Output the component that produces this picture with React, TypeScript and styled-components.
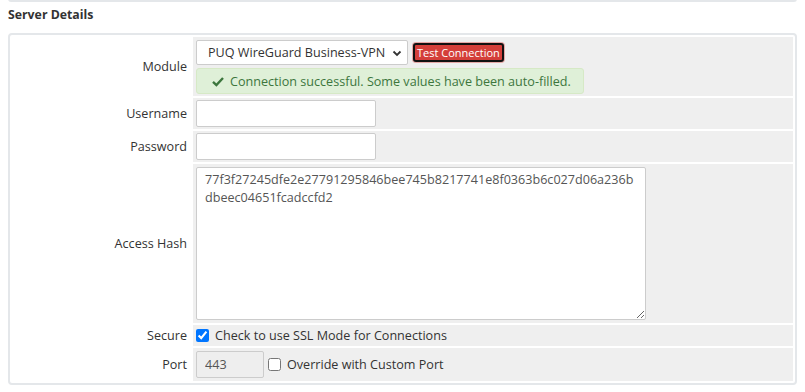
import React from "react";
import styled, { createGlobalStyle } from "styled-components";

const Global = createGlobalStyle`
  html, body { margin: 0; padding: 0; background: #fff; }
  body { margin: 0 8px; font-family: "Open Sans", "Liberation Sans", sans-serif; font-size: 12.6px; color: #333; }
  * { box-sizing: border-box; }
`;

const PrevPanel = styled.div`
  height: 3px;
  margin-top: -1px;
  border: 2px solid #e4e7ea;
  border-top: none;
  border-radius: 0 0 4px 4px;
`;

const Heading = styled.h2`
  margin: 0;
  padding: 4px 0 0 0;
  height: 31px;
  font-size: 12.3px;
  font-weight: 700;
  color: #333;
  line-height: 18px;
`;

const Panel = styled.div`
  border: 2px solid #e4e7ea;
  border-radius: 4px;
  background: #fff;
`;

const Table = styled.table`
  width: 100%;
  border-collapse: separate;
  border-spacing: 2px;
`;

const Label = styled.td`
  width: 179px;
  padding: 0 4px 0 3px;
  text-align: right;
  vertical-align: middle;
  color: #333;
  background: #fff;
`;

const Field = styled.td<{ $pad?: string }>`
  padding: ${(p) => p.$pad ?? "3px"};
  background: #efefef;
  vertical-align: middle;
  line-height: 17px;
`;

const Inline = styled.div<{ $gap?: number }>`
  display: flex;
  align-items: center;
  gap: ${(p) => p.$gap ?? 5}px;
`;

const Select = styled.div`
  display: flex;
  align-items: center;
  justify-content: space-between;
  width: 212px;
  height: 25px;
  padding: 0 4px 0 11px;
  background: #fff;
  border: 1px solid #ccc;
  border-radius: 2px;
  color: #333;
`;

const TestButton = styled.button`
  height: 19px;
  padding: 0 2px;
  font-family: "Open Sans", "Liberation Sans", sans-serif;
  font-size: 11px;
  line-height: 13px;
  color: #fff;
  background: #d43f3a;
  border: 2px solid #111;
  border-radius: 3px;
  box-shadow: 0 0 0 1px rgba(217, 83, 79, 0.45);
`;

const Alert = styled.div`
  display: flex;
  align-items: center;
  gap: 6px;
  width: 388px;
  height: 26px;
  margin-top: 3px;
  padding: 0 0 0 15px;
  background: #dff0d8;
  border: 1px solid #d6e9c6;
  border-radius: 3px;
  color: #3c763d;
  white-space: nowrap;
`;

const Input = styled.input<{ $w: number }>`
  display: block;
  width: ${(p) => p.$w}px;
  height: 27px;
  padding: 4px 8px;
  font-family: "Open Sans", "Liberation Sans", sans-serif;
  font-size: 12.6px;
  color: #555;
  background: ${(p) => (p.disabled ? "#eee" : "#fff")};
  border: 1px solid #ccc;
  border-radius: 2px;
`;

const TextArea = styled.textarea`
  display: block;
  width: 450px;
  height: 153px;
  padding: 3px 8px;
  font-family: "Open Sans", "Liberation Sans", sans-serif;
  font-size: 12.6px;
  line-height: 17.5px;
  color: #555;
  background: #fff;
  border: 1px solid #ccc;
  border-radius: 2px;
  resize: both;
  word-break: break-all;
`;

const Check = styled.label`
  display: flex;
  align-items: center;
  gap: 6px;
  color: #333;
  input { margin: 0; width: 13px; height: 13px; }
`;

const Chevron = () => (
  <svg width="12" height="12" viewBox="0 0 12 12">
    <path d="M2.5 4.5 L6 8 L9.5 4.5" fill="none" stroke="#333" strokeWidth="1.8" />
  </svg>
);

const CheckIcon = () => (
  <svg width="12" height="11" viewBox="0 0 12 11">
    <path d="M1 5.8 L4.4 9 L11 2" fill="none" stroke="#3c763d" strokeWidth="2.4" />
  </svg>
);

const hash =
  "77f3f27245dfe2e27791295846bee745b8217741e8f0363b6c027d06a236bdbeec04651fcadccfd2";

export default function App() {
  return (
    <>
      <Global />
      <PrevPanel />
      <Heading>Server Details</Heading>
      <Panel>
        <Table>
          <tbody>
            <tr>
              <Label>Module</Label>
              <Field $pad="3px 3px 2px 3px">
                <Inline>
                  <Select>
                    <span>PUQ WireGuard Business-VPN</span>
                    <Chevron />
                  </Select>
                  <TestButton>Test Connection</TestButton>
                </Inline>
                <Alert>
                  <CheckIcon />
                  <span>Connection successful. Some values have been auto-filled.</span>
                </Alert>
              </Field>
            </tr>
            <tr>
              <Label>Username</Label>
              <Field $pad="2px 3px">
                <Input $w={180} defaultValue="" />
              </Field>
            </tr>
            <tr>
              <Label>Password</Label>
              <Field $pad="2px 3px">
                <Input $w={180} type="password" defaultValue="" />
              </Field>
            </tr>
            <tr>
              <Label>Access Hash</Label>
              <Field>
                <TextArea defaultValue={hash} />
              </Field>
            </tr>
            <tr>
              <Label>Secure</Label>
              <Field $pad="2px 3px">
                <Check>
                  <input type="checkbox" defaultChecked />
                  Check to use SSL Mode for Connections
                </Check>
              </Field>
            </tr>
            <tr>
              <Label>Port</Label>
              <Field>
                <Inline $gap={4}>
                  <Input $w={68} disabled defaultValue="443" />
                  <Check>
                    <input type="checkbox" />
                    Override with Custom Port
                  </Check>
                </Inline>
              </Field>
            </tr>
          </tbody>
        </Table>
      </Panel>
    </>
  );
}
